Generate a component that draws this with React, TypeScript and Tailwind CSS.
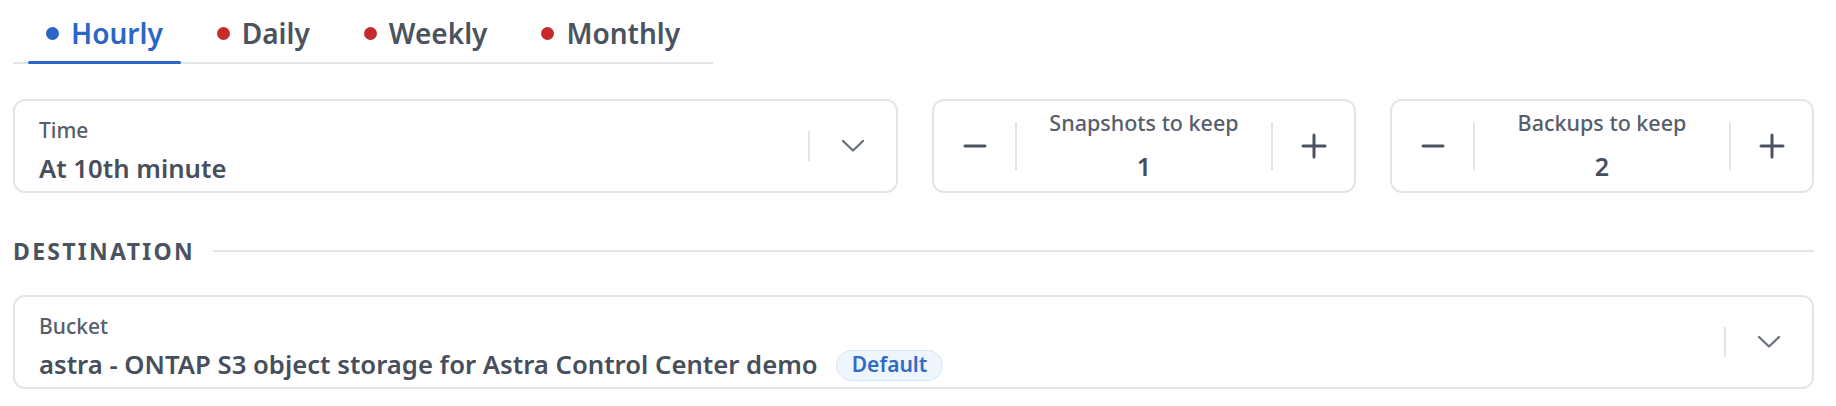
import { useState } from 'react'

type Tab = { id: string; label: string; active?: boolean }

const tabs: Tab[] = [
  { id: 'hourly', label: 'Hourly', active: true },
  { id: 'daily', label: 'Daily' },
  { id: 'weekly', label: 'Weekly' },
  { id: 'monthly', label: 'Monthly' },
]

function Chevron() {
  return (
    <svg width="24" height="14" viewBox="0 0 24 14" fill="none" className="text-[#6b7280]">
      <polyline points="2,2 12,11.5 22,2" stroke="currentColor" strokeWidth="2.4" strokeLinecap="round" strokeLinejoin="round" />
    </svg>
  )
}

function Minus() {
  return (
    <svg width="24" height="24" viewBox="0 0 24 24" fill="none">
      <line x1="2" y1="12" x2="22" y2="12" stroke="#4b5260" strokeWidth="3" strokeLinecap="round" />
    </svg>
  )
}

function Plus() {
  return (
    <svg width="26" height="26" viewBox="0 0 26 26" fill="none">
      <line x1="2" y1="13" x2="24" y2="13" stroke="#4b5260" strokeWidth="3" strokeLinecap="round" />
      <line x1="13" y1="2" x2="13" y2="24" stroke="#4b5260" strokeWidth="3" strokeLinecap="round" />
    </svg>
  )
}

function SelectBox({ label, value, badge }: { label: string; value: string; badge?: string }) {
  return (
    <div className="flex h-[94px] flex-1 items-stretch rounded-[12px] border-2 border-[#e2e5e9] bg-white">
      <div className="flex flex-1 flex-col pl-[24px] pt-[16px]">
        <div className="text-[21px] leading-[26px] font-medium text-[#565d6b]">{label}</div>
        <div className="mt-[10px] flex items-center gap-[18px]">
          <span className="text-[25.7px] leading-[32px] font-semibold text-[#474e5c]">{value}</span>
          {badge && (
            <span className="flex h-[31px] items-center rounded-full border-[1.5px] border-[#d5e4f8] bg-[#eef5fd] px-[15px] text-[21px] font-semibold text-[#2f6bc6]">
              {badge}
            </span>
          )}
        </div>
      </div>
      <div className="flex w-[88px] items-center">
        <div className="h-[30px] w-[2px] bg-[#e2e5e9]" />
        <div className="flex flex-1 justify-center">
          <Chevron />
        </div>
      </div>
    </div>
  )
}

function Stepper({ label, initial }: { label: string; initial: number }) {
  const [count, setCount] = useState(initial)
  return (
    <div className="flex h-[94px] w-[424px] items-center rounded-[12px] border-2 border-[#e2e5e9] bg-white">
      <button className="flex h-full w-[81px] items-center justify-center" onClick={() => setCount(Math.max(0, count - 1))}>
        <Minus />
      </button>
      <div className="h-[48px] w-[2px] bg-[#e2e5e9]" />
      <div className="flex flex-1 flex-col items-center self-stretch pt-[9px]">
        <div className="text-[21.5px] leading-[26px] font-medium text-[#565d6b]">{label}</div>
        <div className="mt-[14px] text-[25px] leading-[32px] font-semibold text-[#474e5c]">{count}</div>
      </div>
      <div className="h-[48px] w-[2px] bg-[#e2e5e9]" />
      <button className="flex h-full w-[81px] items-center justify-center" onClick={() => setCount(count + 1)}>
        <Plus />
      </button>
    </div>
  )
}

export default function App() {
  const [active, setActive] = useState('hourly')

  return (
    <div className="h-[406px] w-[1836px] overflow-hidden bg-white pl-[13px] pr-[22px] font-['Noto_Sans',sans-serif]">
      {/* Frequency tabs */}
      <div className="flex w-[700px] gap-[18px] border-b-2 border-[#e3e6ea] px-[15px]">
        {tabs.map((tab) => {
          const isActive = active === tab.id
          return (
            <button
              key={tab.id}
              onClick={() => setActive(tab.id)}
              className="relative flex items-center gap-[12px] px-[18px] pt-[15px] pb-[11px]"
            >
              <span className={`h-[13px] w-[13px] rounded-full ${isActive ? 'bg-[#2a66c6]' : 'bg-[#c62a2a]'}`} />
              <span className={`text-[28px] leading-[36px] font-semibold ${isActive ? 'text-[#2a66c6]' : 'text-[#4b5260]'}`}>
                {tab.label}
              </span>
              {isActive && <span className="absolute right-0 -bottom-[2px] left-0 h-[3px] rounded-full bg-[#2a66c6]" />}
            </button>
          )
        })}
      </div>

      {/* Schedule row */}
      <div className="mt-[35px] flex gap-[34px]">
        <SelectBox label="Time" value="At 10th minute" />
        <Stepper label="Snapshots to keep" initial={1} />
        <Stepper label="Backups to keep" initial={2} />
      </div>

      {/* Destination */}
      <div className="mt-[43px] flex items-center gap-[18px]">
        <span className="text-[23px] leading-[30px] font-bold tracking-[0.1em] text-[#4b5260]">DESTINATION</span>
        <div className="h-[2px] flex-1 bg-[#e2e5e9]" />
      </div>

      <div className="mt-[29px] flex">
        <SelectBox label="Bucket" value="astra - ONTAP S3 object storage for Astra Control Center demo" badge="Default" />
      </div>
    </div>
  )
}
